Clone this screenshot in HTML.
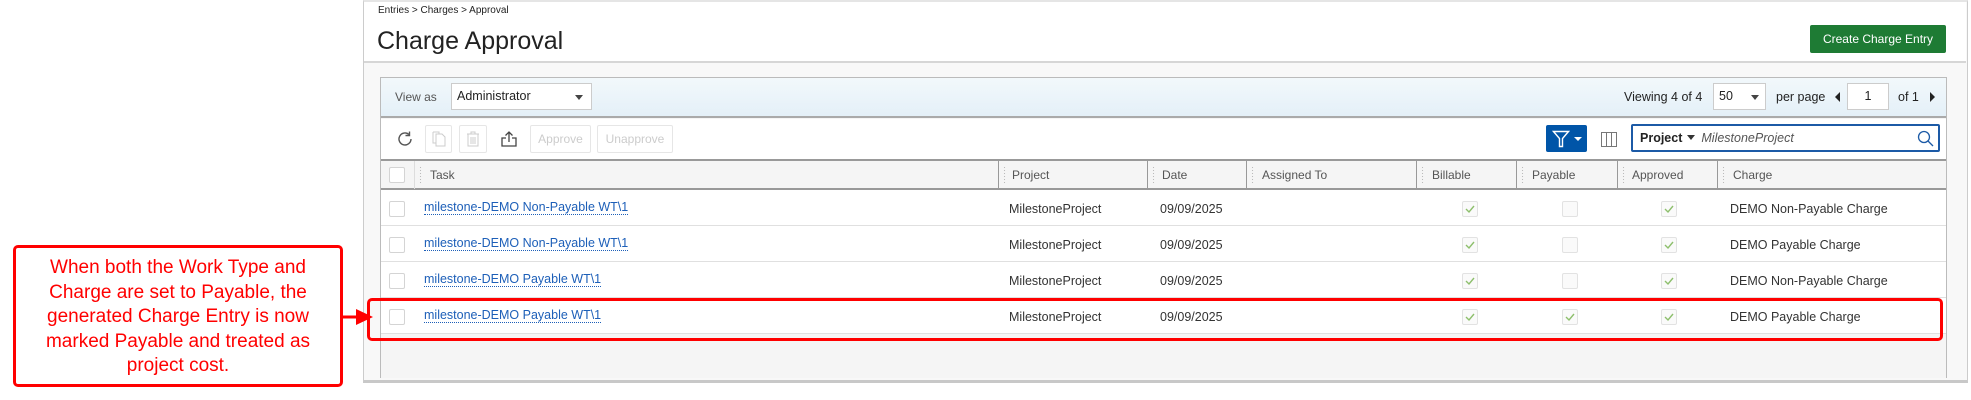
<!DOCTYPE html>
<html><head><meta charset="utf-8"><style>
*{box-sizing:border-box;margin:0;padding:0}
body{width:1971px;height:400px;background:#fff;position:relative;overflow:hidden;font-family:"Liberation Sans",Arial,sans-serif;color:#333}
.a{position:absolute}
.t{font-size:12.5px;white-space:nowrap}
.cb{position:absolute;width:16px;height:16px;border:1px solid #d4d4d4;border-radius:2px;background:#fff}
.ck{position:absolute;width:16px;height:16px;border:1px solid #e2e2e2;border-radius:2px;background:#fafafa}
.ck svg{position:absolute;left:2px;top:2px}
.sep{position:absolute;top:161px;height:28px;width:2px;border-left:1px solid #999}
.dots{position:absolute;top:166px;width:3px;height:18px;background-image:radial-gradient(#bbb 0.6px,transparent 0.8px);background-size:3px 3px}
.hd{position:absolute;top:168px;font-size:12px;color:#555}
.row{position:absolute;left:381px;width:1565px;height:36px;border-bottom:1px solid #e0e0e0;background:#fff}
.lnk{position:absolute;color:#1d5fb8;font-size:12.5px;border-bottom:1px dotted #1d5fb8;line-height:14px;white-space:nowrap}
.btn{position:absolute;top:125px;height:28px;border:1px solid #e6e6e6;border-radius:2px;color:#ccc;font-size:12px;text-align:center;line-height:26px}
</style></head><body>
<div class="a" style="left:363px;top:0;width:1605px;height:383px;border:1px solid #ccc;border-top:2px solid #e5e5e5;border-bottom:3px solid #c8c8c8;background:#f8f8f8"></div>
<div class="a" style="left:364px;top:2px;width:1602px;height:61px;background:#fff;border-bottom:2px solid #d6d6d6"></div>
<div class="a" style="left:378px;top:5px;font-size:10px;color:#222">Entries &gt; Charges &gt; Approval</div>
<div class="a" style="left:377px;top:27px;font-size:25px;color:#222">Charge Approval</div>
<div class="a" style="left:1810px;top:25px;width:136px;height:28px;background:#1e7b34;border-radius:2px;color:#fff;font-size:12px;text-align:center;line-height:28px">Create Charge Entry</div>

<div class="a" style="left:380px;top:77px;width:1567px;height:301px;border:1px solid #bbb;border-bottom:none;background:#f5f5f5"></div>
<div class="a" style="left:381px;top:78px;width:1565px;height:40px;background:linear-gradient(#f2f8fb,#e4f0f8);border-bottom:2px solid #aaa"></div>
<div class="a" style="left:395px;top:90px;font-size:12px;color:#555">View as</div>
<div class="a" style="left:451px;top:83px;width:141px;height:27px;background:#fff;border:1px solid #ccc;font-size:12.5px;line-height:25px;padding-left:5px;color:#222">Administrator<span class="a" style="right:8px;top:11px;border-left:4px solid transparent;border-right:4px solid transparent;border-top:5px solid #444"></span></div>
<div class="a" style="left:1624px;top:90px;font-size:12.5px;color:#222">Viewing <span>4 of 4</span></div>
<div class="a" style="left:1713px;top:83px;width:53px;height:27px;background:#fff;border:1px solid #ccc;font-size:12.5px;line-height:25px;padding-left:5px;color:#222">50<span class="a" style="right:6px;top:11px;border-left:4px solid transparent;border-right:4px solid transparent;border-top:5px solid #444"></span></div>
<div class="a" style="left:1776px;top:90px;font-size:12.5px;color:#222">per page</div>
<div class="a" style="left:1835px;top:92px;border-top:5px solid transparent;border-bottom:5px solid transparent;border-right:5px solid #222"></div>
<div class="a" style="left:1847px;top:83px;width:42px;height:27px;background:#fff;border:1px solid #ccc;font-size:12.5px;line-height:25px;text-align:center;color:#222">1</div>
<div class="a" style="left:1898px;top:90px;font-size:12.5px;color:#222">of 1</div>
<div class="a" style="left:1930px;top:92px;border-top:5px solid transparent;border-bottom:5px solid transparent;border-left:5px solid #222"></div>

<div class="a" style="left:381px;top:119px;width:1565px;height:42px;background:#fff;border-bottom:2px solid #999"></div>
<svg class="a" style="left:396px;top:130px" width="18" height="18" viewBox="0 0 18 18"><path d="M15 9a6 6 0 1 1-2-4.5" fill="none" stroke="#555" stroke-width="1.4"/><path d="M13.5 1.5v4h-4" fill="none" stroke="#555" stroke-width="1.4"/></svg>
<div class="btn" style="left:425px;width:27px"><svg width="14" height="16" viewBox="0 0 14 16" style="margin-top:5px"><path d="M4 3h6l3 3v9H4z M1 1h6v2 M1 1v11h3" fill="none" stroke="#ccc"/></svg></div>
<div class="btn" style="left:459px;width:28px"><svg width="14" height="16" viewBox="0 0 14 16" style="margin-top:5px"><path d="M1 3h12 M5 3V1h4v2 M2 3v12h10V3 M5 6v7 M7 6v7 M9 6v7" fill="none" stroke="#ccc"/></svg></div>
<svg class="a" style="left:500px;top:130px" width="18" height="18" viewBox="0 0 18 18"><path d="M9 12V2 M5.5 5.5L9 2l3.5 3.5 M6 8H2v8h14V8h-4" fill="none" stroke="#444" stroke-width="1.3"/></svg>
<div class="btn" style="left:530px;width:61px">Approve</div>
<div class="btn" style="left:597px;width:76px">Unapprove</div>
<div class="a" style="left:1546px;top:125px;width:41px;height:27px;background:#0055a8;border-radius:2px"><svg class="a" style="left:6px;top:5px" width="18" height="18" viewBox="0 0 18 18"><path d="M1.5 1.5h15l-6 7v8h-3v-8z" fill="none" stroke="#fff" stroke-width="1.4"/></svg><span class="a" style="left:28px;top:12px;border-left:4px solid transparent;border-right:4px solid transparent;border-top:4px solid #fff"></span></div>
<svg class="a" style="left:1601px;top:132px" width="16" height="15" viewBox="0 0 16 15"><path d="M.5.5h15v14H.5z M5.5.5v14 M10.5.5v14" fill="none" stroke="#777"/></svg>
<div class="a" style="left:1631px;top:124px;width:309px;height:28px;background:#fff;border:2px solid #1c5aa6;border-radius:2px;font-size:12.5px;line-height:24px;padding-left:7px"><b style="color:#222">Project</b><span style="display:inline-block;margin:0 6px 2px 5px;border-left:4px solid transparent;border-right:4px solid transparent;border-top:5px solid #333"></span><i style="color:#555">MilestoneProject</i>
<svg class="a" style="right:4px;top:4px" width="17" height="17" viewBox="0 0 17 17"><circle cx="7" cy="7" r="5.5" fill="none" stroke="#1c5aa6" stroke-width="1.3"/><path d="M11 11l5 5" stroke="#1c5aa6" stroke-width="1.3"/></svg></div>

<div class="a" style="left:381px;top:161px;width:1565px;height:29px;background:#f5f5f5;border-bottom:2px solid #999"></div>
<div class="cb" style="left:389px;top:167px"></div>
<div class="a" style="left:414px;top:161px;width:1px;height:28px;background:#ddd"></div>
<div class="dots" style="left:419px"></div><div class="hd" style="left:430px">Task</div>
<div class="sep" style="left:998px"></div><div class="dots" style="left:1003px"></div><div class="hd" style="left:1012px">Project</div>
<div class="sep" style="left:1147px"></div><div class="dots" style="left:1152px"></div><div class="hd" style="left:1162px">Date</div>
<div class="sep" style="left:1246px"></div><div class="dots" style="left:1251px"></div><div class="hd" style="left:1262px">Assigned To</div>
<div class="sep" style="left:1416px"></div><div class="dots" style="left:1421px"></div><div class="hd" style="left:1432px">Billable</div>
<div class="sep" style="left:1516px"></div><div class="dots" style="left:1521px"></div><div class="hd" style="left:1532px">Payable</div>
<div class="sep" style="left:1617px"></div><div class="dots" style="left:1622px"></div><div class="hd" style="left:1632px">Approved</div>
<div class="sep" style="left:1717px"></div><div class="dots" style="left:1722px"></div><div class="hd" style="left:1733px">Charge</div>

<div class="row" style="top:190px"></div>
<div class="row" style="top:226px"></div>
<div class="row" style="top:262px"></div>
<div class="row" style="top:298px"></div>

<div class="cb" style="left:389px;top:201px"></div>
<div class="cb" style="left:389px;top:237px"></div>
<div class="cb" style="left:389px;top:273px"></div>
<div class="cb" style="left:389px;top:309px"></div>

<div class="lnk" style="left:424px;top:200px">milestone-DEMO Non-Payable WT\1</div>
<div class="lnk" style="left:424px;top:236px">milestone-DEMO Non-Payable WT\1</div>
<div class="lnk" style="left:424px;top:272px">milestone-DEMO Payable WT\1</div>
<div class="lnk" style="left:424px;top:308px">milestone-DEMO Payable WT\1</div>

<div class="a t" style="left:1009px;top:202px">MilestoneProject</div>
<div class="a t" style="left:1009px;top:238px">MilestoneProject</div>
<div class="a t" style="left:1009px;top:274px">MilestoneProject</div>
<div class="a t" style="left:1009px;top:310px">MilestoneProject</div>
<div class="a t" style="left:1160px;top:202px">09/09/2025</div>
<div class="a t" style="left:1160px;top:238px">09/09/2025</div>
<div class="a t" style="left:1160px;top:274px">09/09/2025</div>
<div class="a t" style="left:1160px;top:310px">09/09/2025</div>
<div class="a t" style="left:1730px;top:202px">DEMO Non-Payable Charge</div>
<div class="a t" style="left:1730px;top:238px">DEMO Payable Charge</div>
<div class="a t" style="left:1730px;top:274px">DEMO Non-Payable Charge</div>
<div class="a t" style="left:1730px;top:310px">DEMO Payable Charge</div>

<div class="ck" style="left:1462px;top:201px"><svg width="10" height="10" viewBox="0 0 10 10"><path d="M1 5l3 3 5-6" fill="none" stroke="#8dbf6c" stroke-width="1.4"/></svg></div>
<div class="ck" style="left:1462px;top:237px"><svg width="10" height="10" viewBox="0 0 10 10"><path d="M1 5l3 3 5-6" fill="none" stroke="#8dbf6c" stroke-width="1.4"/></svg></div>
<div class="ck" style="left:1462px;top:273px"><svg width="10" height="10" viewBox="0 0 10 10"><path d="M1 5l3 3 5-6" fill="none" stroke="#8dbf6c" stroke-width="1.4"/></svg></div>
<div class="ck" style="left:1462px;top:309px"><svg width="10" height="10" viewBox="0 0 10 10"><path d="M1 5l3 3 5-6" fill="none" stroke="#8dbf6c" stroke-width="1.4"/></svg></div>
<div class="ck" style="left:1562px;top:201px"></div>
<div class="ck" style="left:1562px;top:237px"></div>
<div class="ck" style="left:1562px;top:273px"></div>
<div class="ck" style="left:1562px;top:309px"><svg width="10" height="10" viewBox="0 0 10 10"><path d="M1 5l3 3 5-6" fill="none" stroke="#8dbf6c" stroke-width="1.4"/></svg></div>
<div class="ck" style="left:1661px;top:201px"><svg width="10" height="10" viewBox="0 0 10 10"><path d="M1 5l3 3 5-6" fill="none" stroke="#8dbf6c" stroke-width="1.4"/></svg></div>
<div class="ck" style="left:1661px;top:237px"><svg width="10" height="10" viewBox="0 0 10 10"><path d="M1 5l3 3 5-6" fill="none" stroke="#8dbf6c" stroke-width="1.4"/></svg></div>
<div class="ck" style="left:1661px;top:273px"><svg width="10" height="10" viewBox="0 0 10 10"><path d="M1 5l3 3 5-6" fill="none" stroke="#8dbf6c" stroke-width="1.4"/></svg></div>
<div class="ck" style="left:1661px;top:309px"><svg width="10" height="10" viewBox="0 0 10 10"><path d="M1 5l3 3 5-6" fill="none" stroke="#8dbf6c" stroke-width="1.4"/></svg></div>

<div class="a" style="left:367px;top:298px;width:1576px;height:43px;border:3px solid #ff0000;border-radius:5px"></div>
<div class="a" style="left:13px;top:245px;width:330px;height:142px;border:3px solid #ff0000;border-radius:5px;background:#fff;color:#ff0000;font-family:Arial,'Liberation Sans',sans-serif;font-size:19px;line-height:24.5px;text-align:center;padding-top:8px;white-space:nowrap">When both the Work Type and<br>Charge are set to Payable, the<br>generated Charge Entry is now<br>marked Payable and treated as<br>project cost.</div>
<svg class="a" style="left:342px;top:305px" width="34" height="24" viewBox="0 0 34 24"><path d="M0 12h16" stroke="#ff0000" stroke-width="3"/><path d="M14 4l17 8-17 8z" fill="#ff0000"/></svg>
</body></html>
